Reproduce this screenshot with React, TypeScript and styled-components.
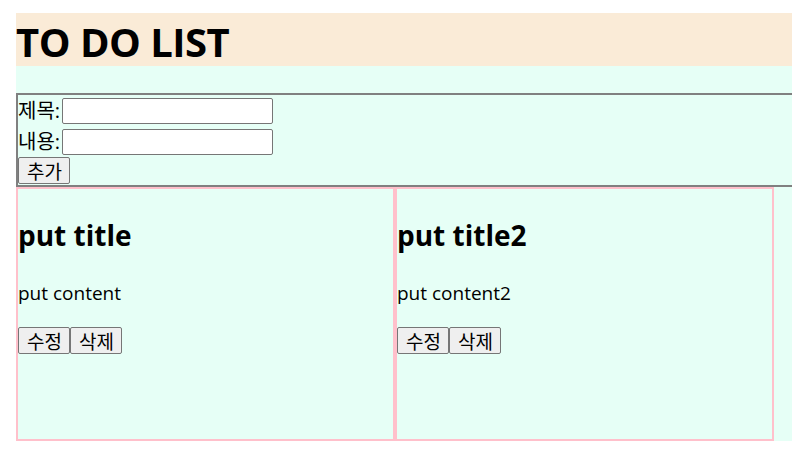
import React from "react";
import styled, { createGlobalStyle } from "styled-components";

const Global = createGlobalStyle`
  html, body { overflow: hidden; }
  body {
    margin: 8px;
    font-family: "Open Sans", "Noto Sans CJK KR", sans-serif;
    font-size: 19px;
    color: #000;
  }
`;

const Page = styled.div`
  margin: 5px 0 0 8px;
  width: 820px;
  background: #e6fff6;
  display: flex;
  flex-direction: column;
`;

const Header = styled.header`
  background: #faebd7;
  height: 53px;
  display: flex;
  align-items: center;
  padding-top: 3px;
  box-sizing: border-box;
`;

const Title = styled.h1`
  margin: 0;
  font-size: 40px;
  font-weight: 700;
  letter-spacing: -0.5px;
`;

const Form = styled.form`
  margin-top: 27px;
  border: 2px solid #808080;
  display: flex;
  flex-direction: column;
  align-items: flex-start;
  padding: 3px 0 1px 0;
`;

const Row = styled.label<{ $gap?: number }>`
  display: flex;
  align-items: center;
  height: 26px;
  line-height: 26px;
  font-size: 20px;
  margin-top: ${(p) => p.$gap ?? 0}px;
`;

const Input = styled.input`
  box-sizing: border-box;
  width: 211px;
  height: 26px;
  border: 1px solid #767676;
  border-radius: 2px;
  background: #fff;
  margin: 0 0 0 2px;
`;

const Button = styled.button<{ $top?: number }>`
  font-family: "Noto Sans CJK KR", sans-serif;
  font-size: 19px;
  height: 27px;
  padding: 0 7px 0 8px;
  margin: ${(p) => p.$top ?? 0}px 0 0 0;
  background: #efefef;
  border: 1px solid #767676;
  border-radius: 2px;
  color: #000;
  line-height: 1;
`;

const Cards = styled.div`
  display: flex;
`;

const Card = styled.div`
  box-sizing: border-box;
  width: 379px;
  height: 254px;
  border: 2px solid #ffc0cb;
  padding: 0;
`;

const CardTitle = styled.h2`
  font-size: 28px;
  font-weight: 700;
  margin: 26px 0 0 0;
  line-height: 40px;
`;

const CardText = styled.p`
  margin: 25px 0 0 0;
  line-height: 26px;
`;

const Actions = styled.div`
  display: flex;
  margin-top: 21px;
`;

const items = [
  { title: "put title", content: "put content" },
  { title: "put title2", content: "put content2" },
];

export default function App() {
  return (
    <>
      <Global />
      <Page>
        <Header>
          <Title>TO DO LIST</Title>
        </Header>
        <Form onSubmit={(e) => e.preventDefault()}>
          <Row>
            제목:<Input type="text" />
          </Row>
          <Row $gap={5}>
            내용:<Input type="text" />
          </Row>
          <Button type="submit" $top={2}>
            추가
          </Button>
        </Form>
        <Cards>
          {items.map((it) => (
            <Card key={it.title}>
              <CardTitle>{it.title}</CardTitle>
              <CardText>{it.content}</CardText>
              <Actions>
                <Button>수정</Button>
                <Button>삭제</Button>
              </Actions>
            </Card>
          ))}
        </Cards>
      </Page>
    </>
  );
}
